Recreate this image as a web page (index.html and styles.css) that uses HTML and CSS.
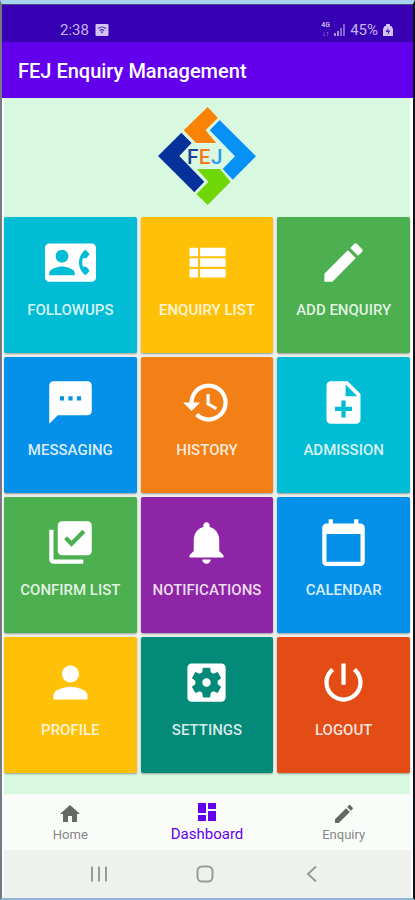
FILE: index.html
```html
<!DOCTYPE html>
<html lang="en">
<head>
  <meta charset="UTF-8">
  <meta name="viewport" content="width=device-width, initial-scale=1.0" />
  <title>FEJ Enquiry Management</title>
  <link rel="stylesheet" href="styles.css">
</head>
<body>
  <div class="screen">
    <div class="status-bar">
      <span>2:38</span>
      <svg class="status-icon" viewBox="0 0 14 14" aria-hidden="true">
        <rect x="0.5" y="1" width="13" height="12" rx="1" fill="#d2c5f4"/>
        <path d="M3 5.5q4-3 8 0M4.8 7.5q2.2-1.6 4.4 0" fill="none" stroke="#4a22b4" stroke-width="1.2"/>
        <path d="M5.5 8.5h3L7 10.5z" fill="#4a22b4"/>
      </svg>
      <div class="status-right">
        <span class="network"><span>4G</span><span>↓↑</span></span>
        <svg class="status-icon" viewBox="0 0 14 14" aria-hidden="true">
          <path d="M1 10h2v3H1zM4 8h2v5H4z" fill="#a78fe5"/>
          <path d="M7 5h2v8H7zM10 1h2v12h-2z" fill="#8064d2"/>
        </svg>
        <span>45%</span>
        <svg class="status-icon" viewBox="0 0 14 14" aria-hidden="true">
          <path d="M5 1h4v2h1.500l1.500 3v7H2V6l1.500-3H5z" fill="#d2c5f4"/>
          <path d="M7.500 4.500L4.500 9H7l-.5 3 3-4.500H7z" fill="#4a22b4"/>
        </svg>
      </div>
    </div>

    <header class="app-bar">
      <h1>FEJ Enquiry Management</h1>
    </header>

    <main class="content">
      <svg class="logo" viewBox="50 25 300 300" role="img" aria-label="FEJ logo">
        <g stroke="#f0fff4" stroke-width="3" paint-order="stroke">
          <path d="M202 28l31 33-37 37 32 38h-61l-37-38z" fill="#f98305"/>
          <path d="M238 67l109 109-70 70-30-32 37-38-76-78z" fill="#0790f5"/>
          <path d="M123 105l31 31-37 39 75 77-30 32L53 175z" fill="#06319b"/>
          <path d="M170 214h69l32 38-69 70-34-33 36-37z" fill="#6fd607"/>
        </g>
        <g class="logo-text">
          <text x="140" y="199" fill="#21409a">F</text>
          <text x="175" y="199" fill="#f4791f">E</text>
          <text x="212" y="199" fill="#2d9be8">J</text>
        </g>
      </svg>

      <div class="tiles">
        <button class="tile cyan">
          <svg class="icon" viewBox="0 0 24 24"><path d="M22 3H2C.9 3 0 3.900 0 5v14c0 1.100.9 2 2 2h20c1.100 0 1.990-.9 1.990-2L24 5c0-1.100-.9-2-2-2zM8 6c1.660 0 3 1.340 3 3s-1.340 3-3 3-3-1.340-3-3 1.340-3 3-3zm6 12H2v-1c0-2 4-3.100 6-3.100s6 1.100 6 3.100v1zm3.850-4h1.640L21 16l-1.990 1.990c-1.310-.98-2.280-2.380-2.730-3.990-.18-.64-.28-1.310-.28-2s.1-1.360.28-2c.45-1.620 1.420-3.010 2.730-3.990L21 8l-1.510 2h-1.640c-.22.63-.35 1.300-.35 2s.13 1.370.35 2z"/></svg>
          Followups
        </button>
        <button class="tile amber">
          <svg class="icon" viewBox="0 0 24 24"><path d="M4 14h4v-4H4v4zm0 5h4v-4H4v4zM4 9h4V5H4v4zm5 5h12v-4H9v4zm0 5h12v-4H9v4zM9 5v4h12V5H9z"/></svg>
          Enquiry List
        </button>
        <button class="tile green">
          <svg class="icon" viewBox="0 0 24 24"><path d="M3 17.250V21h3.750L17.810 9.940l-3.750-3.750L3 17.250zM20.710 7.040c.39-.39.39-1.020 0-1.410l-2.340-2.340c-.39-.39-1.020-.39-1.410 0l-1.830 1.830 3.750 3.750 1.830-1.830z"/></svg>
          Add Enquiry
        </button>

        <button class="tile blue">
          <svg class="icon" viewBox="0 0 24 24"><path d="M20 2H4c-1.100 0-1.990.9-1.990 2L2 22l4-4h14c1.100 0 2-.9 2-2V4c0-1.100-.9-2-2-2zM9 11H7V9h2v2zm4 0h-2V9h2v2zm4 0h-2V9h2v2z"/></svg>
          Messaging
        </button>
        <button class="tile orange">
          <svg class="icon" viewBox="0 0 24 24"><path d="M13 3c-4.970 0-9 4.030-9 9H1l3.890 3.890.07.14L9 12H6c0-3.870 3.130-7 7-7s7 3.130 7 7-3.130 7-7 7c-1.930 0-3.680-.79-4.940-2.060l-1.420 1.420C8.270 19.990 10.510 21 13 21c4.970 0 9-4.030 9-9s-4.030-9-9-9zm-1 5v5l4.280 2.540.72-1.210-3.500-2.080V8H12z"/></svg>
          History
        </button>
        <button class="tile cyan">
          <svg class="icon" viewBox="0 0 24 24"><path d="M14 2H6c-1.100 0-1.990.9-1.990 2L4 20c0 1.100.89 2 1.990 2H18c1.100 0 2-.9 2-2V8l-6-6zm2 14h-3v3h-2v-3H8v-2h3v-3h2v3h3v2zm-3-7V3.500L18.500 9H13z"/></svg>
          Admission
        </button>

        <button class="tile green">
          <svg class="icon" viewBox="0 0 24 24"><path d="M20 2H8c-1.100 0-2 .9-2 2v12c0 1.100.9 2 2 2h12c1.100 0 2-.9 2-2V4c0-1.100-.9-2-2-2zm-7.530 12L9 10.500l1.400-1.410 2.070 2.080L17.600 6 19 7.410 12.470 14zM4 20h14v2H4c-1.100 0-2-.9-2-2V6h2v14z"/></svg>
          Confirm List
        </button>
        <button class="tile purple">
          <svg class="icon" viewBox="0 0 24 24"><path d="M12 22c1.100 0 2-.9 2-2h-4c0 1.100.89 2 2 2zm6-6v-5c0-3.070-1.640-5.640-4.500-6.320V4c0-.83-.67-1.500-1.500-1.500s-1.500.67-1.500 1.500v.68C7.630 5.360 6 7.920 6 11v5l-2 2v1h16v-1l-2-2z"/></svg>
          Notifications
        </button>
        <button class="tile blue">
          <svg class="icon" viewBox="0 0 24 24"><path d="M20 3h-1V1h-2v2H7V1H5v2H4c-1.100 0-2 .9-2 2v16c0 1.100.9 2 2 2h16c1.100 0 2-.9 2-2V5c0-1.100-.9-2-2-2zm0 18H4V8h16v13z"/></svg>
          Calendar
        </button>

        <button class="tile amber">
          <svg class="icon" viewBox="0 0 24 24"><path d="M12 12c2.210 0 4-1.790 4-4s-1.790-4-4-4-4 1.790-4 4 1.790 4 4 4zm0 2c-2.670 0-8 1.340-8 4v2h16v-2c0-2.660-5.330-4-8-4z"/></svg>
          Profile
        </button>
        <button class="tile teal">
          <svg class="icon" viewBox="0 0 24 24"><path d="M12 10c-1.100 0-2 .9-2 2s.9 2 2 2 2-.9 2-2-.9-2-2-2zm7-7H5c-1.110 0-2 .9-2 2v14c0 1.100.89 2 2 2h14c1.110 0 2-.9 2-2V5c0-1.100-.89-2-2-2zm-1.750 9c0 .23-.02.46-.05.68l1.480 1.160c.13.11.17.3.08.45l-1.400 2.420c-.09.15-.27.21-.43.15l-1.740-.7c-.36.28-.76.51-1.180.69l-.26 1.850c-.03.17-.18.3-.35.3h-2.800c-.17 0-.32-.13-.35-.29l-.26-1.850c-.43-.18-.82-.41-1.180-.69l-1.740.7c-.16.06-.34 0-.43-.15l-1.400-2.420c-.09-.15-.05-.34.08-.45l1.480-1.160c-.03-.23-.05-.46-.05-.69 0-.23.02-.46.05-.68l-1.480-1.160c-.13-.11-.17-.3-.08-.45l1.400-2.420c.09-.15.27-.21.43-.15l1.740.7c.36-.28.76-.51 1.180-.69l.26-1.850c.03-.17.18-.3.35-.3h2.800c.17 0 .32.13.35.29l.26 1.850c.43.18.82.41 1.180.69l1.740-.7c.16-.06.34 0 .43.15l1.400 2.420c.09.15.05.34-.08.45l-1.480 1.160c.03.23.05.46.05.69z"/></svg>
          Settings
        </button>
        <button class="tile red">
          <svg class="icon" viewBox="0 0 24 24"><path d="M13 3h-2v10h2V3zm4.830 2.170l-1.420 1.420C17.990 7.860 19 9.810 19 12c0 3.870-3.130 7-7 7s-7-3.130-7-7c0-2.190 1.010-4.140 2.580-5.420L6.170 5.170C4.230 6.820 3 9.260 3 12c0 4.970 4.030 9 9 9s9-4.030 9-9c0-2.740-1.230-5.180-3.170-6.830z"/></svg>
          Logout
        </button>
      </div>
    </main>

    <nav class="bottom-nav">
      <a href="#home">
        <svg class="nav-icon" viewBox="0 0 24 24"><path d="M10 20v-6h4v6h5v-8h3L12 3 2 12h3v8z"/></svg>
        Home
      </a>
      <a href="#dashboard" class="active">
        <svg class="nav-icon" viewBox="0 0 24 24"><path d="M3 13h8V3H3v10zm0 8h8v-6H3v6zm10 0h8V11h-8v10zm0-18v6h8V3h-8z"/></svg>
        Dashboard
      </a>
      <a href="#enquiry">
        <svg class="nav-icon" viewBox="0 0 24 24"><path d="M3 17.250V21h3.750L17.810 9.940l-3.750-3.750L3 17.250zM20.710 7.040c.39-.39.39-1.020 0-1.410l-2.340-2.340c-.39-.39-1.020-.39-1.410 0l-1.830 1.830 3.750 3.750 1.830-1.830z"/></svg>
        Enquiry
      </a>
    </nav>

    <div class="system-nav">
      <button aria-label="Recent apps"><svg viewBox="0 0 18 18"><path d="M2 1.500v15M9 1.500v15M16 1.500v15"/></svg></button>
      <button aria-label="Home screen"><svg viewBox="0 0 18 18"><rect x="1.500" y="1.500" width="15" height="15" rx="4.500"/></svg></button>
      <button aria-label="Back"><svg viewBox="0 0 18 18"><path d="M13 1.500L5 9l8 7.500"/></svg></button>
    </div>
  </div>
</body>
</html>
```

FILE: styles.css
```css
:root {
  --primary: #6200ee;
  --primary-dark: #3700b3;
  --mint: #d8f8df;
}
* {
  box-sizing: border-box;
}
body {
  margin: 0;
  font-family: Roboto, "Liberation Sans", sans-serif;
}
.screen {
  display: flex;
  flex-direction: column;
  min-height: 100vh;
  border: 2px solid #101018;
  border-left-color: #777983;
  border-top: 4px solid #a5d3f0;
  border-bottom-color: #8bb5d2;
  background: #fff;
}
.status-bar {
  display: flex;
  align-items: center;
  gap: 6px;
  height: 38px;
  padding: 12px 18px 0 58px;
  border-top: 1px solid #4b4a7c;
  background: var(--primary-dark);
  color: #c3b3ef;
  font-size: 15px;
}
.status-icon {
  width: 14px;
  height: 14px;
}
.status-right {
  display: flex;
  align-items: center;
  gap: 3px;
  margin-left: auto;
}
.network {
  display: flex;
  flex-direction: column;
  align-items: center;
  font-size: 7px;
  line-height: 9px;
  font-weight: 700;
}
.app-bar {
  display: flex;
  align-items: center;
  height: 56px;
  padding: 2px 16px 0;
  background: var(--primary);
}
.app-bar h1 {
  margin: 0;
  font-size: 20px;
  font-weight: 500;
  color: #fff;
}
.content {
  flex: 1;
  display: flex;
  flex-direction: column;
  align-items: center;
  margin: 0 3px 0 2px;
  background: var(--mint);
}
.logo {
  width: 100px;
  height: 100px;
  margin: 8px 0 11px;
}
.logo-text {
  font-size: 62px;
  font-weight: 500;
}

/* dashboard tiles */
.tiles {
  display: grid;
  grid-template-columns: repeat(3, 1fr);
  gap: 4px;
  width: 100%;
  background: #eef0ee;
}
.tile {
  display: flex;
  flex-direction: column;
  align-items: center;
  gap: 12px;
  height: 136px;
  padding: 20px 0 0;
  border: none;
  border-radius: 2px;
  box-shadow: 0 1px 2px rgba(0,0,0,0.35);
  color: rgba(255,255,255,0.85);
  font-family: inherit;
  font-size: 15px;
  font-weight: 500;
  line-height: 20px;
  text-transform: uppercase;
  cursor: pointer;
}
.icon {
  width: 51px;
  height: 51px;
  fill: #fff;
}
.cyan { background: #00bcd4; }
.amber { background: #ffc107; }
.green { background: #4caf50; }
.blue { background: #0591ea; }
.orange { background: #f28016; }
.purple { background: #8e24a6; }
.teal { background: #048a78; }
.red { background: #e44c16; }

.bottom-nav {
  display: flex;
  height: 56px;
  margin-right: 1px;
  background: #fafcfa;
}
.bottom-nav a {
  flex: 1;
  display: flex;
  flex-direction: column;
  align-items: center;
  padding-top: 8px;
  color: #858785;
  font-size: 13px;
  line-height: 18px;
  text-decoration: none;
}
.bottom-nav .active {
  padding-top: 6px;
  color: var(--primary);
  font-size: 15px;
  line-height: 20px;
}
.nav-icon {
  width: 24px;
  height: 24px;
  fill: #666866;
}
.active .nav-icon {
  fill: var(--primary);
}
.system-nav {
  display: flex;
  justify-content: space-between;
  align-items: center;
  height: 48px;
  margin: 0 2px;
  padding: 0 22% 0 21%;
  background: #eff1ef;
}
.system-nav button {
  display: flex;
  padding: 0;
  border: none;
  background: none;
}
.system-nav svg {
  width: 18px;
  height: 18px;
  fill: none;
  stroke: #999b99;
  stroke-width: 2px;
}
```
